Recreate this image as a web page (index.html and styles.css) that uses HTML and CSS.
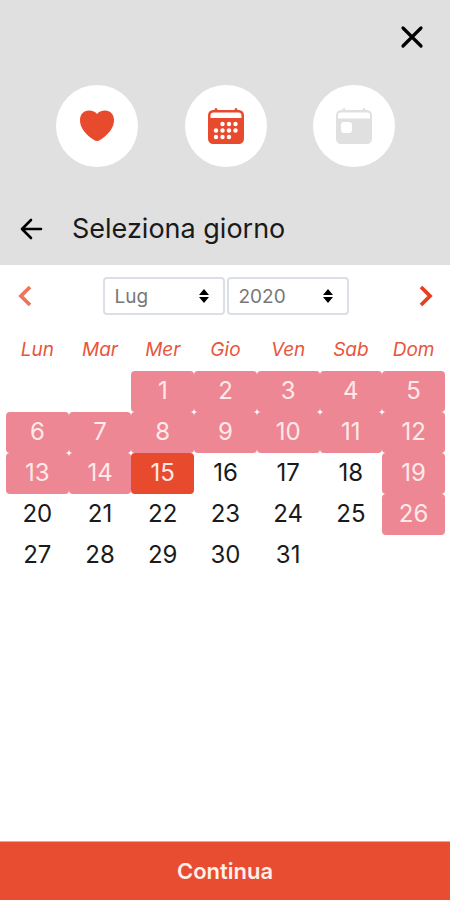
FILE: index.html
```html
<!DOCTYPE html>
<html lang="it">
<head>
<meta charset="utf-8">
<meta name="viewport" content="width=device-width, initial-scale=1">
<title>Seleziona giorno</title>
<link rel="stylesheet" href="styles.css">
</head>
<body>
<header class="header">
  <button class="icon-button close" type="button" aria-label="Chiudi">
    <svg width="24" height="24" viewBox="0 0 24 24"><path d="M3 3l18 18M21 3L3 21" fill="none" stroke="#000" stroke-width="3.200" stroke-linecap="round"/></svg>
  </button>
  <div class="steps">
    <div class="step">
      <svg width="34" height="32" viewBox="0 0 34 32"><path d="M17 31C15 31 13 29.500 11 28C4 22.500 0 17 0 10C0 4.500 3.500 .5 9 .5C12.500 .5 15.500 2 17 4C18.500 2 21.500 .5 25 .5C30.500 .5 34 4.500 34 10C34 17 30 22.500 23 28C21 29.500 19 31 17 31Z" fill="#e84a2e"/></svg>
    </div>
    <div class="step">
      <svg width="36" height="37" viewBox="0 0 36 37">
        <path d="M8 0c1 0 1.500 1 1.500 2h17c0-1 .5-2 1.500-2s1.500 1 1.500 2h.5c4 0 6 2 6 6v22c0 4-2 6-6 6H6c-4 0-6-2-6-6V8c0-4 2-6 6-6h.5C6.500 1 7 0 8 0Z" fill="#e84a2e"/>
        <path d="M2.500 10V7.500C2.500 5.500 3.800 4.500 5.500 4.500h25c1.700 0 3 1 3 3V10Z" fill="#fff"/>
        <g fill="#fff"><circle cx="14.500" cy="16" r="2.200"/><circle cx="21" cy="16" r="2.200"/><circle cx="27.500" cy="16" r="2.200"/><circle cx="8" cy="22.500" r="2.200"/><circle cx="14.500" cy="22.500" r="2.200"/><circle cx="21" cy="22.500" r="2.200"/><circle cx="27.500" cy="22.500" r="2.200"/><circle cx="8" cy="29" r="2.200"/><circle cx="14.500" cy="29" r="2.200"/><circle cx="21" cy="29" r="2.200"/></g>
      </svg>
    </div>
    <div class="step">
      <svg width="36" height="37" viewBox="0 0 36 37">
        <path d="M8 0c1 0 1.500 1 1.500 2h17c0-1 .5-2 1.500-2s1.500 1 1.500 2h.5c4 0 6 2 6 6v22c0 4-2 6-6 6H6c-4 0-6-2-6-6V8c0-4 2-6 6-6h.5C6.500 1 7 0 8 0Z" fill="#e0e0e0"/>
        <path d="M2 10.500V7C2 5.500 3 4.500 4.500 4.500h27C33 4.500 34 5.500 34 7v3.500Z" fill="#fff"/>
        <rect x="5" y="14" width="11" height="11" rx="3" fill="#fff"/>
      </svg>
    </div>
  </div>
  <div class="title-row">
    <button class="icon-button" type="button" aria-label="Indietro">
      <svg width="24" height="24" viewBox="0 0 24 24"><path d="M21 12H3M11 3L2 12l9 9" fill="none" stroke="#000" stroke-width="2.600" stroke-linecap="round" stroke-linejoin="round"/></svg>
    </button>
    <h1 class="title">Seleziona giorno</h1>
  </div>
</header>
<main class="calendar">
  <div class="month-bar">
    <button class="icon-button" type="button" aria-label="Mese precedente">
      <svg width="14" height="22" viewBox="0 0 14 22"><path d="M12 2L3 11l9 9" fill="none" stroke="#eb765c" stroke-width="3.800"/></svg>
    </button>
    <div class="selects">
      <div class="select-box">
        <select class="select" aria-label="Mese"><option>Lug</option></select>
        <svg class="select-arrows" width="10" height="14" viewBox="0 0 10 14"><path d="M0 6L5 0l5 6ZM0 8h10l-5 6Z"/></svg>
      </div>
      <div class="select-box">
        <select class="select" aria-label="Anno"><option>2020</option></select>
        <svg class="select-arrows" width="10" height="14" viewBox="0 0 10 14"><path d="M0 6L5 0l5 6ZM0 8h10l-5 6Z"/></svg>
      </div>
    </div>
    <button class="icon-button" type="button" aria-label="Mese successivo">
      <svg width="14" height="22" viewBox="0 0 14 22"><path d="M2 2l9 9-9 9" fill="none" stroke="#e5401f" stroke-width="3.800"/></svg>
    </button>
  </div>
  <table class="days">
    <thead>
      <tr><th>Lun</th><th>Mar</th><th>Mer</th><th>Gio</th><th>Ven</th><th>Sab</th><th>Dom</th></tr>
    </thead>
    <tbody>
      <tr><td></td><td></td><td><button class="day off" type="button">1</button></td><td><button class="day off" type="button">2</button></td><td><button class="day off" type="button">3</button></td><td><button class="day off" type="button">4</button></td><td><button class="day off" type="button">5</button></td></tr>
      <tr><td><button class="day off" type="button">6</button></td><td><button class="day off" type="button">7</button></td><td><button class="day off" type="button">8</button></td><td><button class="day off" type="button">9</button></td><td><button class="day off" type="button">10</button></td><td><button class="day off" type="button">11</button></td><td><button class="day off" type="button">12</button></td></tr>
      <tr><td><button class="day off" type="button">13</button></td><td><button class="day off" type="button">14</button></td><td><button class="day selected" type="button">15</button></td><td><button class="day" type="button">16</button></td><td><button class="day" type="button">17</button></td><td><button class="day" type="button">18</button></td><td><button class="day off" type="button">19</button></td></tr>
      <tr><td><button class="day" type="button">20</button></td><td><button class="day" type="button">21</button></td><td><button class="day" type="button">22</button></td><td><button class="day" type="button">23</button></td><td><button class="day" type="button">24</button></td><td><button class="day" type="button">25</button></td><td><button class="day off" type="button">26</button></td></tr>
      <tr><td><button class="day" type="button">27</button></td><td><button class="day" type="button">28</button></td><td><button class="day" type="button">29</button></td><td><button class="day" type="button">30</button></td><td><button class="day" type="button">31</button></td><td></td><td></td></tr>
    </tbody>
  </table>
</main>
<button class="continue" type="button">Continua</button>
</body>
</html>
```
FILE: styles.css
```css
* {
  box-sizing: border-box;
}

body {
  display: flex;
  flex-direction: column;
  min-height: 100vh;
  margin: 0;
  background: #fff;
  color: #1a1a1a;
  font-family: Inter, "Open Sans", sans-serif;
}

button,
select {
  margin: 0;
  font-family: inherit;
}

svg {
  display: block;
}

.icon-button {
  padding: 0;
  border: 0;
  background: none;
  cursor: pointer;
}

.header {
  display: flex;
  flex-direction: column;
  padding: 25px 20px 20px;
  background: #e0e0e0;
}

.close {
  align-self: flex-end;
  margin-right: 6px;
}

.steps {
  display: flex;
  justify-content: space-between;
  padding: 36px 35px 0 36px;
}

.step {
  display: flex;
  align-items: center;
  justify-content: center;
  width: 82px;
  height: 82px;
  border-radius: 50%;
  background: #fff;
}

.title-row {
  display: flex;
  align-items: center;
  gap: 28px;
  margin-top: 46px;
}

.title {
  margin: 0;
  font-size: 27px;
  font-weight: 400;
  line-height: 32px;
}

.calendar {
  flex: 1;
  padding: 12px 5px 12px 6px;
}

.month-bar {
  display: flex;
  align-items: center;
  justify-content: space-between;
  padding: 0 12px;
}

.selects {
  display: flex;
  gap: 2px;
}

.select-box {
  position: relative;
}

.select {
  display: block;
  width: 122px;
  height: 38px;
  padding: 0 10px;
  border: 2px solid #dcdfe5;
  border-radius: 4px;
  appearance: none;
  background: #fff;
  color: #777;
  font-size: 19px;
}

.select-arrows {
  position: absolute;
  top: 12px;
  right: 16px;
  pointer-events: none;
}

.days {
  width: 100%;
  margin-top: 12px;
  border-collapse: collapse;
  table-layout: fixed;
}

.days th {
  height: 44px;
  padding: 0;
  color: #e8553c;
  font-size: 19px;
  font-style: italic;
  font-weight: 400;
}

.days td {
  height: 41px;
  padding: 0;
}

.day {
  display: block;
  width: 100%;
  height: 41px;
  padding: 0 0 2px;
  border: 0;
  border-radius: 4px;
  background: none;
  color: #1a1a1a;
  font-size: 24px;
  cursor: pointer;
}

.off {
  background: #ed8794;
  color: #ffe9e9;
}

.selected {
  background: #e84a2e;
  color: #ffe9e4;
}

.continue {
  height: 59px;
  padding: 0;
  border: 0;
  border-top: 1px solid #e8a79b;
  background: #e84c31;
  color: #ffefe9;
  font-size: 22px;
  font-weight: 600;
  cursor: pointer;
}
```
